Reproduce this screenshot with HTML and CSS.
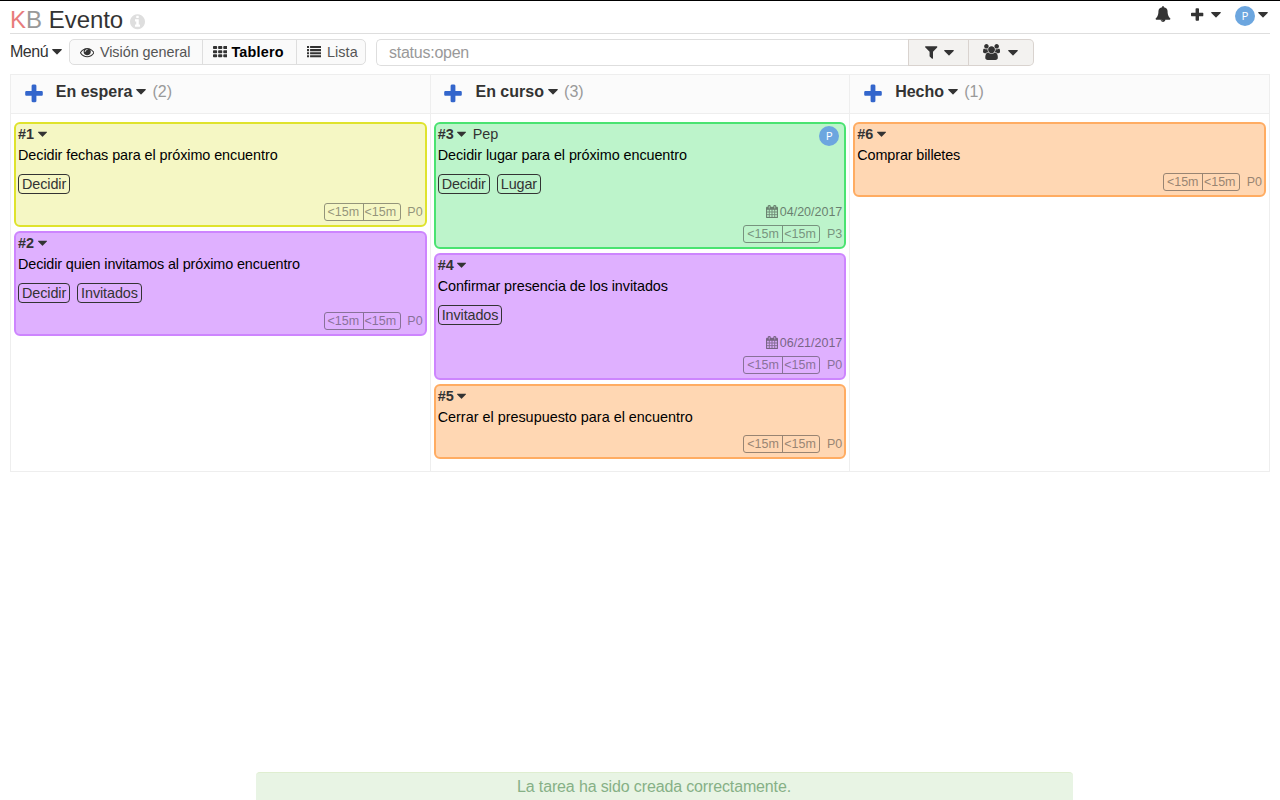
FILE: index.html
```html
<!DOCTYPE html>
<html lang="es">
<head>
<meta charset="utf-8">
<title>Evento</title>
<link rel="stylesheet" href="styles.css">
</head>
<body>
<svg class="sprite" aria-hidden="true">
  <symbol id="caret" viewBox="384 0 1024 1792"><path d="M1408 704q0 26-19 45l-448 448q-19 19-45 19t-45-19l-448-448q-19-19-19-45t19-45 45-19h896q26 0 45 19t19 45z"/></symbol>
  <symbol id="plus" viewBox="192 0 1408 1792"><path d="M1600 736v192q0 40-28 68t-68 28h-416v416q0 40-28 68t-68 28h-192q-40 0-68-28t-28-68v-416h-416q-40 0-68-28t-28-68v-192q0-40 28-68t68-28h416v-416q0-40 28-68t68-28h192q40 0 68 28t28 68v416h416q40 0 68 28t28 68z"/></symbol>
  <symbol id="info" viewBox="128 0 1536 1792"><path d="M1152 1376v-160q0-14-9-23t-23-9h-96v-512q0-14-9-23t-23-9h-320q-14 0-23 9t-9 23v160q0 14 9 23t23 9h96v320h-96q-14 0-23 9t-9 23v160q0 14 9 23t23 9h448q14 0 23-9t9-23zm-128-896v-160q0-14-9-23t-23-9h-192q-14 0-23 9t-9 23v160q0 14 9 23t23 9h192q14 0 23-9t9-23zm640 416q0 209-103 385.5t-279.5 279.5-385.5 103-385.5-103-279.5-279.5-103-385.5 103-385.5 279.5-279.5 385.5-103 385.5 103 279.5 279.5 103 385.5z"/></symbol>
  <symbol id="bell" viewBox="0 0 1792 1792"><path d="M912 1696q0-16-16-16-59 0-101.5-42.5t-42.5-101.5q0-16-16-16t-16 16q0 73 51.5 124.5t124.5 51.5q16 0 16-16zm816-288q0 52-38 90t-90 38h-448q0 106-75 181t-181 75-181-75-75-181h-448q-52 0-90-38t-38-90q50-42 91-88t85-119.5 74.5-158.5 50-206 19.5-260q0-152 117-282.5t307-158.5q-8-19-8-39 0-40 28-68t68-28 68 28 28 68q0 20-8 39 190 28 307 158.5t117 282.5q0 139 19.5 260t50 206 74.5 158.5 85 119.5 91 88z"/></symbol>
  <symbol id="eye" viewBox="0 0 1792 1792"><path d="M1664 960q-152-236-381-353 61 104 61 225 0 185-131.5 316.5t-316.5 131.5-316.5-131.5-131.5-316.5q0-121 61-225-229 117-381 353 133 205 333.5 326.5t434.5 121.5 434.5-121.5 333.5-326.5zm-720-384q0-20-14-34t-34-14q-125 0-214.5 89.5t-89.5 214.5q0 20 14 34t34 14 34-14 14-34q0-86 61-147t147-61q20 0 34-14t14-34zm848 384q0 34-20 69-140 230-376.5 368.5t-499.5 138.5-499.5-139-376.5-368q-20-35-20-69t20-69q140-229 376.5-368t499.5-139 499.5 139 376.5 368q20 35 20 69z"/></symbol>
  <symbol id="grid" viewBox="0 0 1792 1792"><g><rect x="0" y="128" width="512" height="384" rx="96"/><rect x="640" y="128" width="512" height="384" rx="96"/><rect x="1280" y="128" width="512" height="384" rx="96"/><rect x="0" y="640" width="512" height="384" rx="96"/><rect x="640" y="640" width="512" height="384" rx="96"/><rect x="1280" y="640" width="512" height="384" rx="96"/><rect x="0" y="1152" width="512" height="384" rx="96"/><rect x="640" y="1152" width="512" height="384" rx="96"/><rect x="1280" y="1152" width="512" height="384" rx="96"/></g></symbol>
  <symbol id="list" viewBox="0 0 1792 1792"><path d="M0 128h256v256H0zM384 128h1408v256H384zM0 512h256v256H0zM384 512h1408v256H384zM0 896h256v256H0zM384 896h1408v256H384zM0 1280h256v256H0zM384 1280h1408v256H384z"/></symbol>
  <symbol id="filter" viewBox="192 0 1408 1792"><path d="M1595 295q17 41-14 70l-493 493v742q0 42-39 59-13 5-25 5-27 0-45-19l-256-256q-19-19-19-45v-486l-493-493q-31-29-14-70 17-39 59-39h1280q42 0 59 39z"/></symbol>
  <symbol id="users" viewBox="0 0 1920 1792"><path d="M593 896q-162 5-265 128h-134q-82 0-138-40.5t-56-118.5q0-353 124-353 6 0 43.5 21t97.5 42.5 119 21.5q67 0 133-23-5 37-5 66 0 139 81 256zm1071 637q0 120-73 189.5t-194 69.5h-874q-121 0-194-69.5t-73-189.5q0-53 3.5-103.5t14-109 26.5-108.5 43-97.5 62-81 85.5-53.5 111.5-20q10 0 43 21.5t73 48 107 48 135 21.5 135-21.5 107-48 73-48 43-21.5q61 0 111.5 20t85.5 53.5 62 81 43 97.5 26.5 108.5 14 109 3.5 103.5zm-1024-1277q0 106-75 181t-181 75-181-75-75-181 75-181 181-75 181 75 75 181zm704 384q0 159-112.5 271.5t-271.5 112.5-271.5-112.5-112.5-271.5 112.5-271.5 271.5-112.5 271.5 112.5 112.5 271.5zm576 225q0 78-56 118.5t-138 40.5h-134q-103-123-265-128 81-117 81-256 0-29-5-66 66 23 133 23 59 0 119-21.5t97.5-42.5 43.5-21q124 0 124 353zm-128-609q0 106-75 181t-181 75-181-75-75-181 75-181 181-75 181 75 75 181z"/></symbol>
  <symbol id="calendar" viewBox="64 0 1664 1792"><path d="M192 1664h288v-288h-288v288zm352 0h320v-288h-320v288zm-352-352h288v-320h-288v320zm352 0h320v-320h-320v320zm-352-384h288v-288h-288v288zm736 736h320v-288h-320v288zm-384-736h320v-288h-320v288zm768 736h288v-288h-288v288zm-384-352h320v-320h-320v320zm-352-864v-288q0-13-9.5-22.5t-22.5-9.5h-64q-13 0-22.5 9.5t-9.5 22.5v288q0 13 9.5 22.5t22.5 9.5h64q13 0 22.5-9.5t9.5-22.5zm736 864h288v-320h-288v320zm-384-384h320v-288h-320v288zm384 0h288v-288h-288v288zm32-480v-288q0-13-9.5-22.5t-22.5-9.5h-64q-13 0-22.5 9.5t-9.5 22.5v288q0 13 9.5 22.5t22.5 9.5h64q13 0 22.5-9.5t9.5-22.5zm384-64v1280q0 52-38 90t-90 38h-1408q-52 0-90-38t-38-90v-1280q0-52 38-90t90-38h128v-96q0-66 47-113t113-47h64q66 0 113 47t47 113v96h384v-96q0-66 47-113t113-47h64q66 0 113 47t47 113v96h128q52 0 90 38t38 90z"/></symbol>
</svg>

<header class="header">
  <h1 class="title"><span class="logo"><span class="logo-k">K</span>B</span> Evento <svg class="icon info"><use href="#info"/></svg></h1>
  <div class="user-tools">
    <svg class="icon bell"><use href="#bell"/></svg>
    <span class="tool-new"><svg class="icon plus"><use href="#plus"/></svg><svg class="icon caret"><use href="#caret"/></svg></span>
    <span class="tool-user"><span class="avatar">P</span><svg class="icon caret"><use href="#caret"/></svg></span>
  </div>
</header>

<nav class="toolbar">
  <div class="menu">Menú <svg class="icon caret"><use href="#caret"/></svg></div>
  <ul class="views">
    <li class="view view-overview"><svg class="icon"><use href="#eye"/></svg><span>Visión general</span></li>
    <li class="view view-board active"><svg class="icon"><use href="#grid"/></svg><span>Tablero</span></li>
    <li class="view view-list"><svg class="icon"><use href="#list"/></svg><span>Lista</span></li>
  </ul>
  <div class="search">
    <div class="search-input">status:open</div>
    <div class="search-button filter-button"><svg class="icon plus"><use href="#filter"/></svg><svg class="icon caret"><use href="#caret"/></svg></div>
    <div class="search-button users-button"><svg class="icon users"><use href="#users"/></svg><svg class="icon caret"><use href="#caret"/></svg></div>
  </div>
</nav>

<main class="board">
  <section class="column">
    <h2 class="column-head"><svg class="icon add"><use href="#plus"/></svg><span class="name">En espera</span><svg class="icon caret"><use href="#caret"/></svg><span class="count">(2)</span></h2>
    <div class="tasks">
      <article class="task yellow">
        <div class="task-head"><b>#1</b><svg class="icon caret"><use href="#caret"/></svg></div>
        <div class="task-title">Decidir fechas para el próximo encuentro</div>
        <div class="tags"><span class="tag">Decidir</span></div>
        <div class="task-foot"><span class="times"><span>&lt;15m</span><span>&lt;15m</span></span><span>P0</span></div>
      </article>
      <article class="task purple">
        <div class="task-head"><b>#2</b><svg class="icon caret"><use href="#caret"/></svg></div>
        <div class="task-title tight">Decidir quien invitamos al próximo encuentro</div>
        <div class="tags"><span class="tag">Decidir</span><span class="tag">Invitados</span></div>
        <div class="task-foot"><span class="times"><span>&lt;15m</span><span>&lt;15m</span></span><span>P0</span></div>
      </article>
    </div>
  </section>
  <section class="column">
    <h2 class="column-head"><svg class="icon add"><use href="#plus"/></svg><span class="name">En curso</span><svg class="icon caret"><use href="#caret"/></svg><span class="count">(3)</span></h2>
    <div class="tasks">
      <article class="task green">
        <div class="task-head"><b>#3</b><svg class="icon caret"><use href="#caret"/></svg><span class="assignee">Pep</span><span class="avatar">P</span></div>
        <div class="task-title">Decidir lugar para el próximo encuentro</div>
        <div class="tags"><span class="tag">Decidir</span><span class="tag">Lugar</span></div>
        <div class="task-date"><svg class="icon calendar"><use href="#calendar"/></svg>04/20/2017</div>
        <div class="task-foot"><span class="times"><span>&lt;15m</span><span>&lt;15m</span></span><span>P3</span></div>
      </article>
      <article class="task purple">
        <div class="task-head"><b>#4</b><svg class="icon caret"><use href="#caret"/></svg></div>
        <div class="task-title">Confirmar presencia de los invitados</div>
        <div class="tags"><span class="tag">Invitados</span></div>
        <div class="task-date"><svg class="icon calendar"><use href="#calendar"/></svg>06/21/2017</div>
        <div class="task-foot"><span class="times"><span>&lt;15m</span><span>&lt;15m</span></span><span>P0</span></div>
      </article>
      <article class="task orange">
        <div class="task-head"><b>#5</b><svg class="icon caret"><use href="#caret"/></svg></div>
        <div class="task-title normal">Cerrar el presupuesto para el encuentro</div>
        <div class="task-foot"><span class="times"><span>&lt;15m</span><span>&lt;15m</span></span><span>P0</span></div>
      </article>
    </div>
  </section>
  <section class="column">
    <h2 class="column-head"><svg class="icon add"><use href="#plus"/></svg><span class="name">Hecho</span><svg class="icon caret"><use href="#caret"/></svg><span class="count">(1)</span></h2>
    <div class="tasks">
      <article class="task orange">
        <div class="task-head"><b>#6</b><svg class="icon caret"><use href="#caret"/></svg></div>
        <div class="task-title tight">Comprar billetes</div>
        <div class="task-foot"><span class="times"><span>&lt;15m</span><span>&lt;15m</span></span><span>P0</span></div>
      </article>
    </div>
  </section>
</main>

<div class="alert">La tarea ha sido creada correctamente.</div>
</body>
</html>
```
FILE: styles.css
```css
* { box-sizing: border-box; }
html { height: 100%; overflow: hidden; }
body {
  margin: 0;
  height: 100%;
  padding: 0 10px;
  border-top: 1px solid #000;
  background: #fff;
  color: #333;
  font: 16px/20px "Liberation Sans", Arial, sans-serif;
}
.sprite { position: absolute; width: 0; height: 0; }
.icon { width: 1em; height: 1em; fill: currentColor; flex: none; display: block; }
.caret { width: 10px; height: 17px; }
.plus { width: .7857em; }

.header {
  display: flex;
  justify-content: space-between;
  height: 33px;
  border-bottom: 1px solid #dedede;
}
.title {
  display: flex;
  gap: 7px;
  margin: 0;
  padding-top: 5px;
  font-size: 24px;
  line-height: 28px;
  font-weight: 400;
  letter-spacing: -.1px;
}
.logo { color: #999; }
.logo-k { color: #e87c7c; }
.info { width: 15px; height: 17.5px; color: #dedede; margin-top: 7px; }
.user-tools { display: flex; padding: 5px 2px 0 0; }
.tool-new { display: flex; margin: 0 0 0 20.5px; }
.tool-new .plus { margin-top: 1px; }
.tool-new .caret { margin-left: 7px; }
.tool-user { display: flex; margin-left: 14px; }
.tool-user .caret { margin-left: 3px; }
.avatar {
  width: 20px;
  height: 20px;
  border-radius: 50%;
  background: #6ca6df;
  color: #fff;
  font: 11.5px/20px "Open Sans", sans-serif;
  text-align: center;
}

.toolbar { display: flex; height: 40px; padding-top: 5px; }
.menu { display: flex; gap: 3.5px; width: 59px; padding-top: 3px; letter-spacing: -.5px; }
.menu .caret { margin-top: 1px; }
.views {
  display: flex;
  margin: 0;
  padding: 0;
  list-style: none;
  width: 297px;
  height: 26px;
  border: 1px solid #dedede;
  border-radius: 5px;
  background: #fafafa;
  font-size: 14.4px;
  line-height: 24px;
}
.view { display: flex; gap: 5.5px; padding-left: 10px; color: #555; white-space: nowrap; }
.view + .view { border-left: 1px solid #dedede; }
.view .icon { margin-top: 5px; color: #333; }
.view-overview { width: 132px; letter-spacing: -.03px; }
.view-board { width: 94px; letter-spacing: .2px; gap: 4px; }
.view-list { letter-spacing: .1px; }
.view.active { color: #000; font-weight: 700; }
.search { display: flex; margin-left: 10px; height: 27px; width: 658px; }
.search-input {
  flex: 1;
  padding: 3px 12px;
  border: 1px solid #dedede;
  border-right: 0;
  border-radius: 5px 0 0 5px;
  color: #999;
  letter-spacing: -.25px;
}
.search-button { display: flex; padding: 4px 0 0 16px; border: 1px solid #d9d3cf; background: #f3f2f0; }
.filter-button { width: 61px; }
.filter-button .caret { margin-left: 6px; }
.users-button { width: 65px; padding-left: 14px; border-left: 0; border-radius: 0 5px 5px 0; }
.users { width: 17.1px; }
.users-button .caret { margin-left: 8px; }

.board {
  display: grid;
  grid-template-columns: repeat(3, 1fr);
  height: 398px;
  border: 1px solid #eee;
  border-right: 0;
}
.column { border-right: 1px solid #eee; }
.column-head {
  display: flex;
  margin: 0;
  height: 39px;
  padding: 7px 0 0 13.8px;
  border-bottom: 1px solid #eee;
  background: #fbfbfb;
  font-size: 16px;
  line-height: 20px;
}
.add { width: 18px; height: 22.4px; margin: 1px 13px 0 0; color: #36c; }
.column-head .caret { margin: 1px 0 0 4.2px; }
.count { margin-left: 6px; color: #999; font-weight: 400; }
.tasks { display: grid; gap: 4px; padding: 8px 3px 0; }

.task { border: 2px solid; border-radius: 6px; padding: 0 2px 4px; font-size: 14.4px; }
.yellow { background: #f5f7c4; border-color: #dfe32d; }
.purple { background: #dfb0ff; border-color: #cd85fe; }
.green { background: #bdf4cb; border-color: #4ae371; }
.orange { background: #ffd7b3; border-color: #ffac62; }
.task-head { display: flex; height: 21px; }
.task-head .caret { width: 9px; height: 15.75px; margin: 2px 0 0 3.5px; }
.assignee { margin-left: 6.5px; }
.task-head .avatar { margin: 2px 3px 0 auto; }
.task-title { color: #000; height: 20px; letter-spacing: -.07px; }
.task-title.tight { letter-spacing: -.12px; }
.task-title.normal { letter-spacing: 0; }
.tags { display: flex; gap: 7px; margin-top: 9px; padding-bottom: 1px; }
.tag { height: 20px; padding: 0 3px; border: 1px solid #333; border-radius: 4px; line-height: 19px; letter-spacing: -.1px; }
.task-date {
  display: flex;
  justify-content: flex-end;
  gap: 2px;
  height: 14px;
  margin: 10px 0 0;
  font-size: 12.5px;
  line-height: 14px;
  opacity: .6;
}
.calendar { width: 12px; height: 13px; stroke: currentColor; stroke-width: 40; }
.task-foot {
  display: flex;
  justify-content: flex-end;
  gap: 6.8px;
  margin-top: 8px;
  height: 18px;
  font-size: 12.5px;
  line-height: 18px;
  opacity: .5;
}
.task-date + .task-foot { margin-top: 6px; }
.times { display: flex; border: 1px solid #333; border-radius: 3px; line-height: 16px; }
.times span { width: 36px; padding-left: 1px; }
.times span:first-child { width: 39px; padding-left: 3px; border-right: 1px solid #333; }

/* Notice fixed to the bottom edge, over the page */
.alert {
  position: fixed;
  left: 256px;
  top: 772px;
  width: 817px;
  height: 40px;
  padding: 4px 21px 0 0;
  border-top: 1px solid #dfeed0;
  border-radius: 4px;
  background: #e8f4e4;
  color: #86b086;
  text-align: center;
  letter-spacing: -.14px;
}
```
